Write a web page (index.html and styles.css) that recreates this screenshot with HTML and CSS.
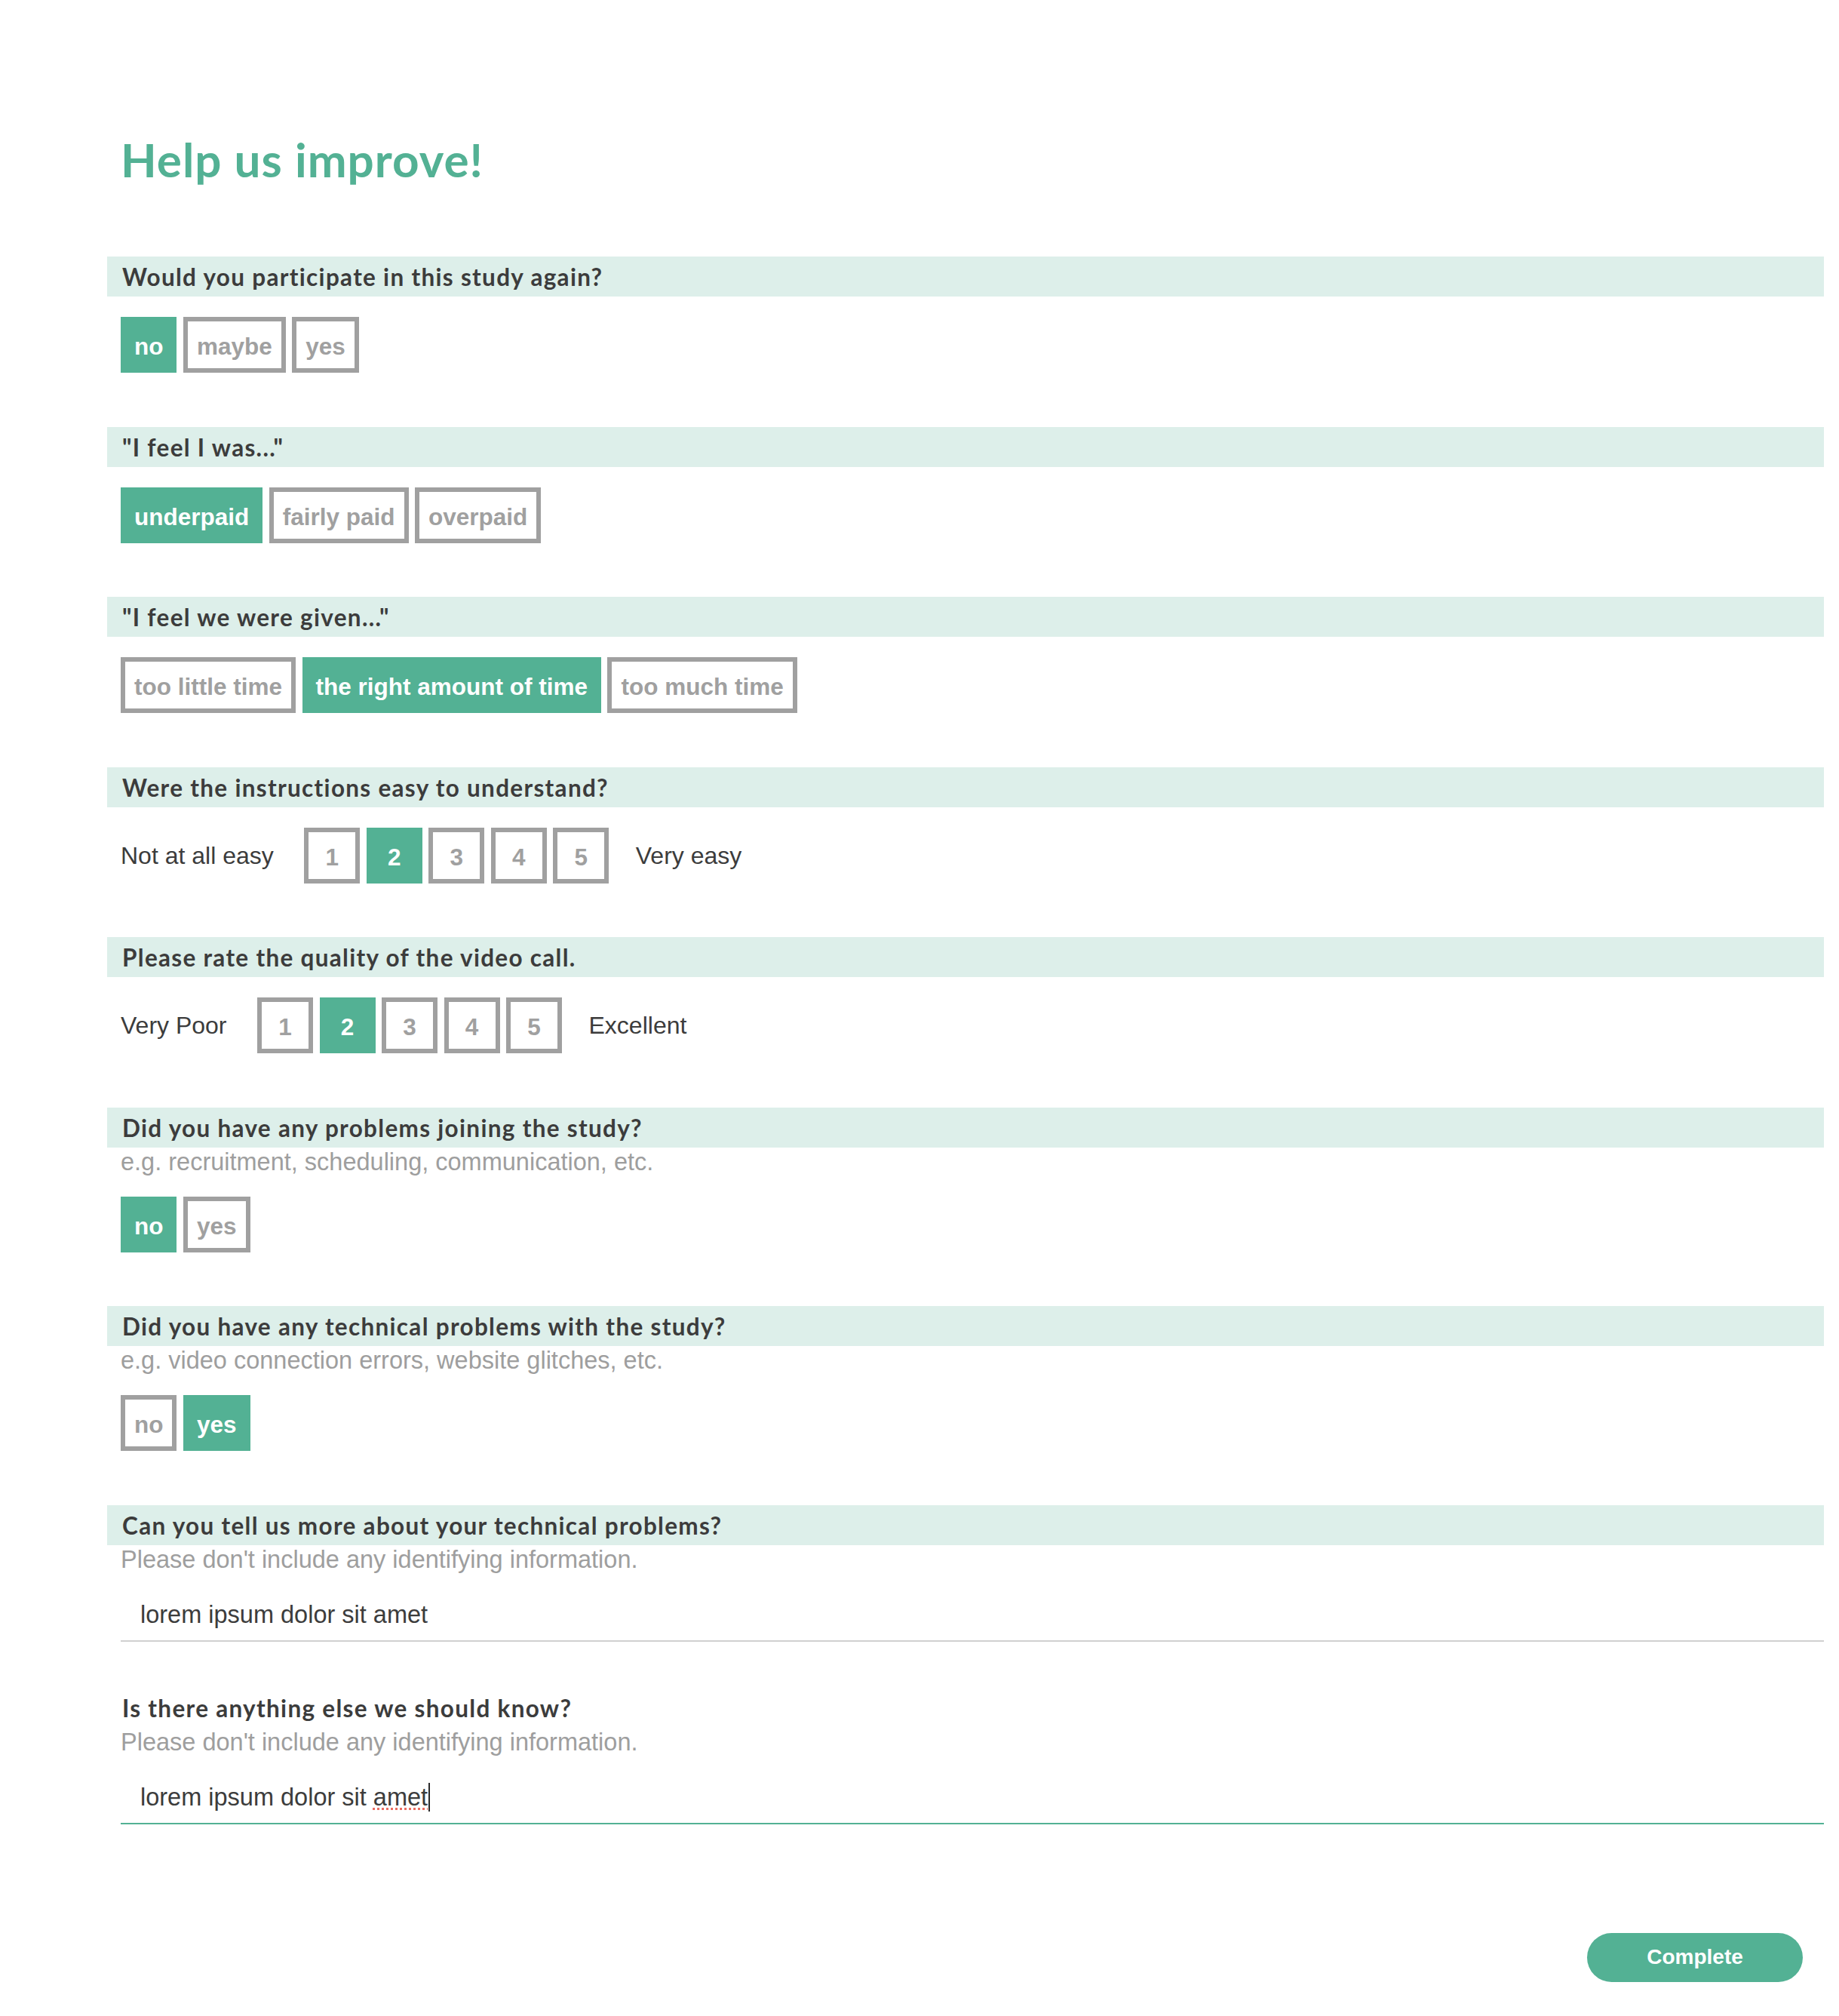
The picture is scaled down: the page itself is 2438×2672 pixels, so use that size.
FILE: index.html
```html
<!DOCTYPE html>
<html lang="en">
<head>
<meta charset="utf-8">
<title>Help us improve!</title>
<link rel="stylesheet" href="styles.css">
</head>
<body>
<main class="survey">
  <h1 class="title">Help us improve!</h1>

  <section class="question">
    <h2 class="q-head">Would you participate in this study again?</h2>
    <div class="options">
      <span class="opt is-selected">no</span>
      <span class="opt">maybe</span>
      <span class="opt">yes</span>
    </div>
  </section>

  <section class="question">
    <h2 class="q-head">"I feel I was..."</h2>
    <div class="options">
      <span class="opt is-selected">underpaid</span>
      <span class="opt">fairly paid</span>
      <span class="opt">overpaid</span>
    </div>
  </section>

  <section class="question">
    <h2 class="q-head">"I feel we were given..."</h2>
    <div class="options">
      <span class="opt">too little time</span>
      <span class="opt is-selected">the right amount of time</span>
      <span class="opt">too much time</span>
    </div>
  </section>

  <section class="question">
    <h2 class="q-head">Were the instructions easy to understand?</h2>
    <div class="options">
      <span class="scale-label scale-label--low">Not at all easy</span>
      <span class="opt opt--num">1</span>
      <span class="opt opt--num is-selected">2</span>
      <span class="opt opt--num">3</span>
      <span class="opt opt--num">4</span>
      <span class="opt opt--num">5</span>
      <span class="scale-label scale-label--high">Very easy</span>
    </div>
  </section>

  <section class="question">
    <h2 class="q-head">Please rate the quality of the video call.</h2>
    <div class="options">
      <span class="scale-label scale-label--low">Very Poor</span>
      <span class="opt opt--num">1</span>
      <span class="opt opt--num is-selected">2</span>
      <span class="opt opt--num">3</span>
      <span class="opt opt--num">4</span>
      <span class="opt opt--num">5</span>
      <span class="scale-label scale-label--high">Excellent</span>
    </div>
  </section>

  <section class="question">
    <h2 class="q-head">Did you have any problems joining the study?</h2>
    <p class="hint">e.g. recruitment, scheduling, communication, etc.</p>
    <div class="options">
      <span class="opt is-selected">no</span>
      <span class="opt">yes</span>
    </div>
  </section>

  <section class="question">
    <h2 class="q-head">Did you have any technical problems with the study?</h2>
    <p class="hint">e.g. video connection errors, website glitches, etc.</p>
    <div class="options">
      <span class="opt">no</span>
      <span class="opt is-selected">yes</span>
    </div>
  </section>

  <section class="question question--text">
    <h2 class="q-head">Can you tell us more about your technical problems?</h2>
    <p class="hint">Please don't include any identifying information.</p>
    <div class="text-input">lorem ipsum dolor sit amet</div>
  </section>

  <section class="question question--last">
    <h2 class="q-head q-head--plain">Is there anything else we should know?</h2>
    <p class="hint">Please don't include any identifying information.</p>
    <div class="text-input is-focused">lorem ipsum dolor sit <span class="misspelled">amet</span><span class="caret"></span></div>
  </section>

  <div class="actions">
    <button class="btn-complete" type="button">Complete</button>
  </div>
</main>
</body>
</html>
```

FILE: styles.css
```css
* {
  box-sizing: border-box;
}

body {
  margin: 0;
  background: #ffffff;
  font-family: "Liberation Sans", Arial, sans-serif;
  color: #3c3c3c;
}

.survey {
  padding: 174px 20px 44px 160px;
}

.title {
  margin: 0 0 92px;
  font-family: Lato, "Noto Sans", sans-serif;
  font-weight: 700;
  font-size: 62px;
  line-height: 74px;
  letter-spacing: 1px;
  color: #53b194;
}

.question {
  margin-bottom: 71.5px;
}

.question--text {
  margin-bottom: 61px;
}

.question--last {
  margin-bottom: 144px;
}

.q-head {
  margin: 0 0 0 -18px;
  padding: 3px 0 1px 20px;
  height: 53px;
  line-height: 49px;
  background: #ddefea;
  font-family: Lato, "Noto Sans", sans-serif;
  font-weight: 700;
  font-size: 31.5px;
  letter-spacing: 1.3px;
  color: #3c3c3c;
}

.q-head--plain {
  background: transparent;
}

.hint {
  margin: 0;
  font-size: 32.5px;
  line-height: 38px;
  color: #9e9e9e;
}

.options {
  display: flex;
  align-items: center;
  gap: 8.5px;
  margin-top: 27px;
}

.opt {
  height: 74px;
  border: 6px solid #a0a0a0;
  padding: 4px 12px 0;
  line-height: 58px;
  font-weight: 700;
  font-size: 31.5px;
  color: #a0a0a0;
  background: #ffffff;
  white-space: nowrap;
}

.opt.is-selected {
  background: #53b194;
  border-color: #53b194;
  color: #ffffff;
}

.opt--num {
  width: 74px;
  padding: 4px 0 0;
  text-align: center;
}

.scale-label {
  font-size: 32px;
  line-height: 38px;
  color: #3c3c3c;
  white-space: nowrap;
}

.scale-label--low {
  margin-right: 32px;
}

.scale-label--high {
  margin-left: 27px;
}

.text-input {
  border-bottom: 2px solid #d0d0d0;
  padding: 35px 26px 15px;
  font-size: 32.5px;
  line-height: 38px;
  height: 90px;
  color: #3c3c3c;
  white-space: nowrap;
}

.text-input.is-focused {
  border-bottom-color: #53b194;
}

.misspelled {
  text-decoration-line: underline;
  text-decoration-style: dotted;
  text-decoration-color: #ea6d63;
  text-decoration-thickness: 3px;
  text-underline-offset: 3px;
}

.caret {
  display: inline-block;
  width: 2px;
  height: 38px;
  margin-left: 1px;
  vertical-align: top;
  background: #2a2a2a;
}

.actions {
  display: flex;
  justify-content: flex-end;
  padding-right: 28px;
}

.btn-complete {
  width: 286px;
  height: 65px;
  border: 0;
  border-radius: 33px;
  background: #53b194;
  color: #ffffff;
  font-family: "Liberation Sans", Arial, sans-serif;
  font-weight: 700;
  font-size: 28px;
  padding: 0;
}
```
